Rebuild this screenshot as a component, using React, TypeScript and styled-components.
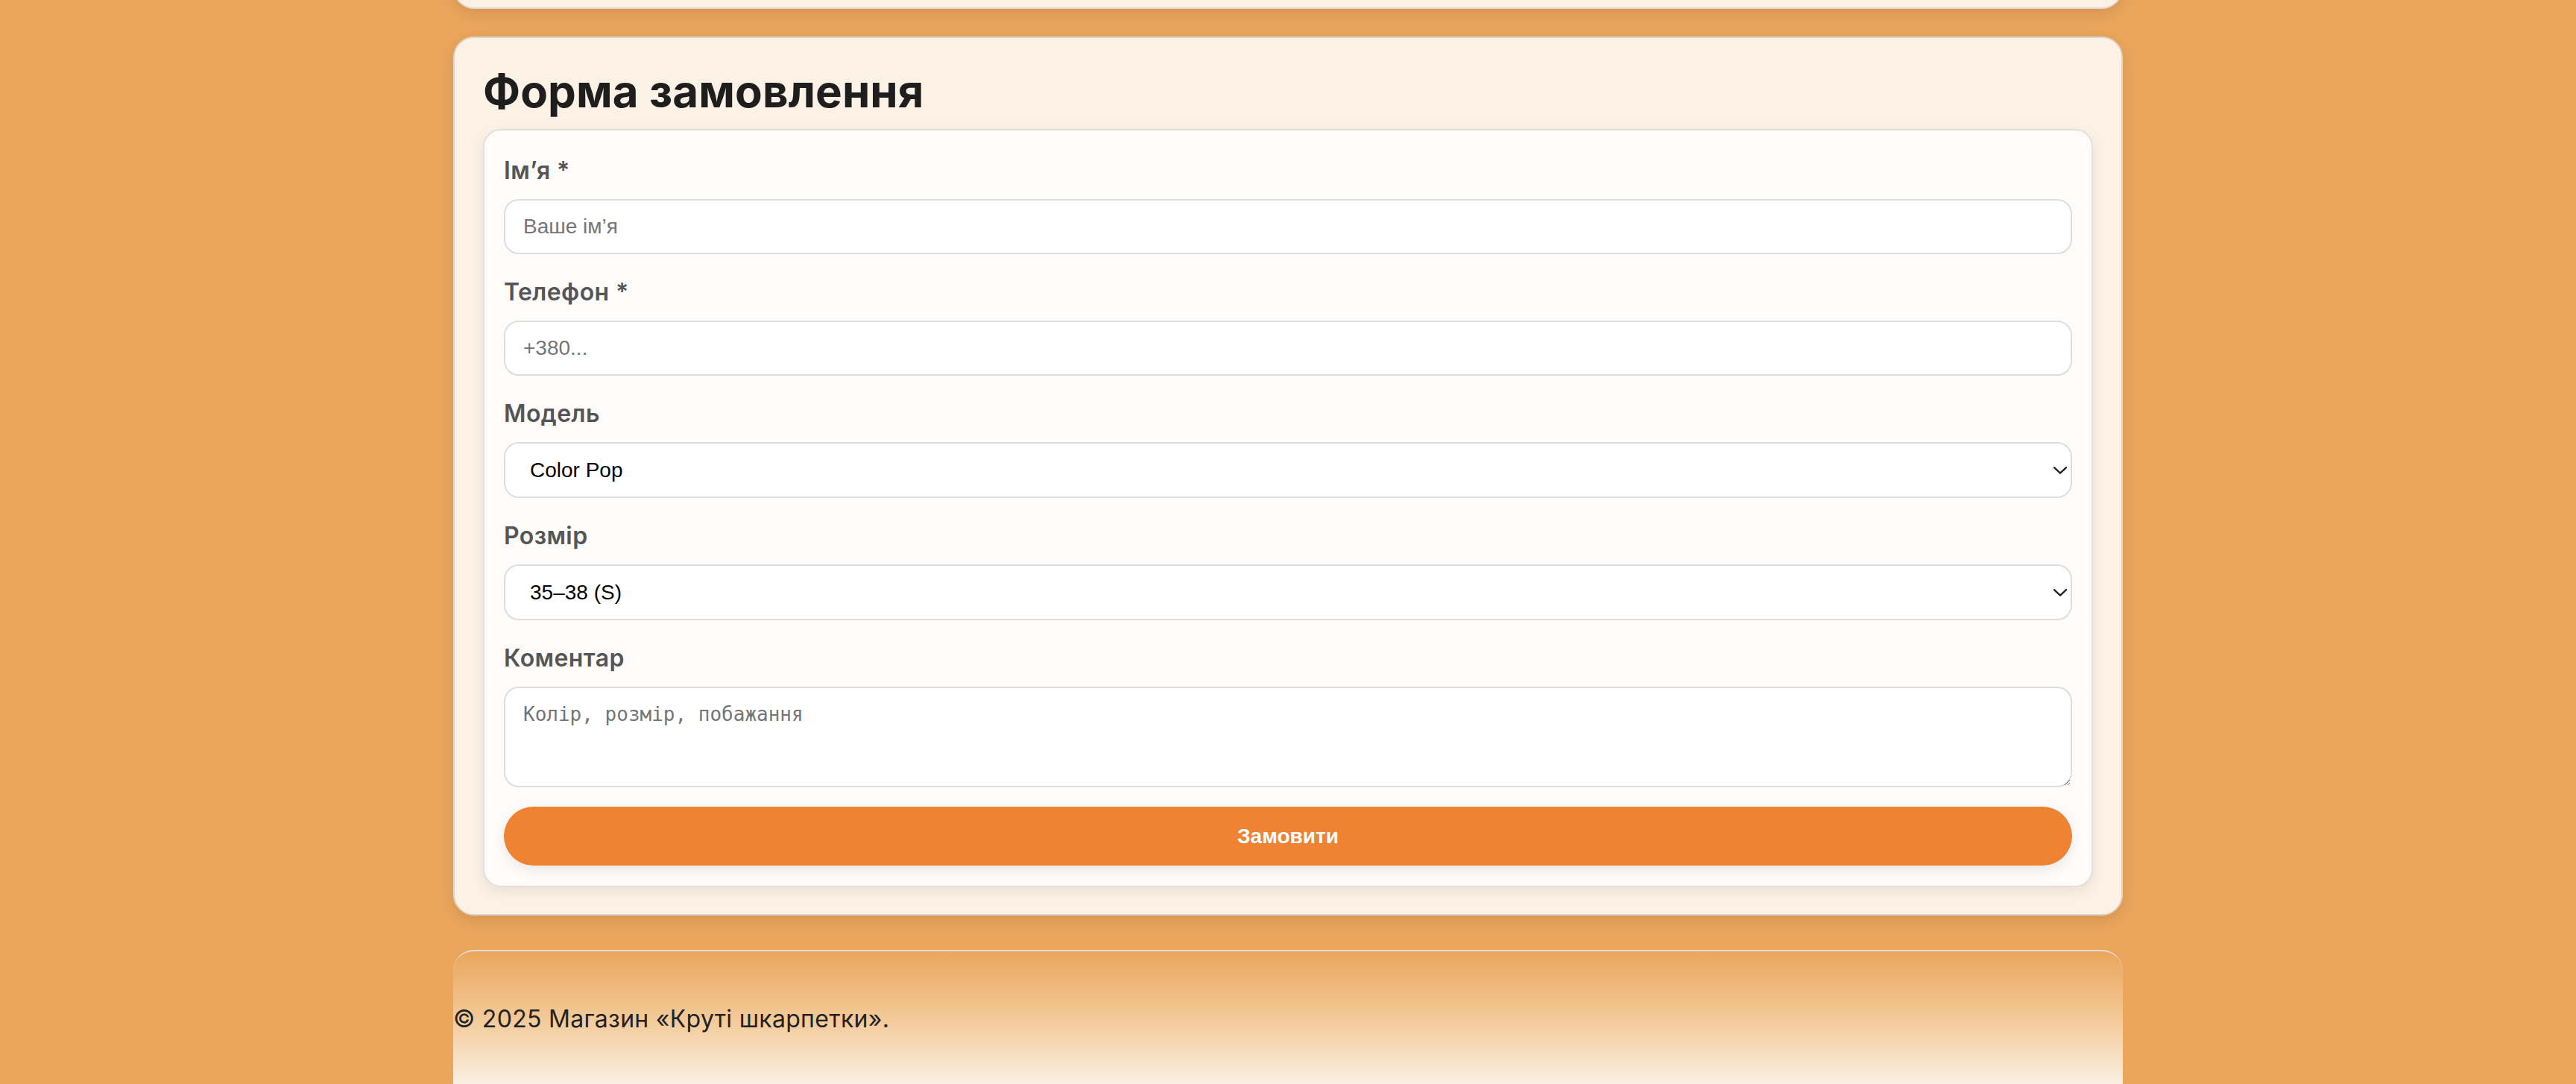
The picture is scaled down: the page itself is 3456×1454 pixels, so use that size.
import React from "react";
import styled, { createGlobalStyle } from "styled-components";

const GlobalStyle = createGlobalStyle`
  html, body {
    margin: 0;
    padding: 0;
    background: #eaa65c;
  }
  body {
    font-family: Inter, "Noto Sans", sans-serif;
    overflow: hidden;
  }
  * { box-sizing: border-box; }
`;

const Page = styled.div`
  width: 2240px;
  margin: 0 auto;
  display: flex;
  flex-direction: column;
`;

const PrevCard = styled.section`
  height: 160px;
  margin-top: -148px;
  background: #fbf1e5;
  border: 2px solid #ddd6ce;
  border-radius: 28px;
  box-shadow: 0 6px 20px rgba(90, 40, 0, 0.14);
`;

const Card = styled.section`
  margin-top: 37px;
  background: #fbf1e5;
  border: 2px solid #ddd6ce;
  border-radius: 28px;
  padding: 35px 38px 36px;
  box-shadow: 0 6px 20px rgba(90, 40, 0, 0.14);
`;

const Title = styled.h2`
  margin: 0 0 15px;
  font-family: Inter, "Noto Sans", sans-serif;
  font-weight: 700;
  font-size: 60px;
  line-height: 72px;
  color: #1e1e1e;
  letter-spacing: 0.1px;
`;

const FormBox = styled.form`
  display: flex;
  flex-direction: column;
  background: #fdfcfa;
  border: 2px solid #e3e0dc;
  border-radius: 24px;
  padding: 30px 26px 27px;
  box-shadow: 0 6px 18px rgba(0, 0, 0, 0.07);
`;

const Field = styled.div<{ $after: number }>`
  display: flex;
  flex-direction: column;
  gap: 14px;
  margin-bottom: ${(p) => p.$after}px;
`;

const Label = styled.label`
  font-family: Inter, "Noto Sans", sans-serif;
  font-weight: 600;
  font-size: 32px;
  line-height: 48px;
  letter-spacing: 0.4px;
  color: #555555;
`;

const controlBase = `
  width: 100%;
  background: #ffffff;
  border: 2px solid #dedede;
  border-radius: 20px;
  font-family: "Liberation Sans", Arial, sans-serif;
  font-size: 28px;
  color: #111111;
  outline: none;
  margin: 0;
`;

const TextInput = styled.input`
  ${controlBase}
  height: 74px;
  padding: 0 24px;
  &::placeholder { color: #757575; }
`;

const SelectWrap = styled.div`
  position: relative;
  display: flex;
`;

const Select = styled.select`
  ${controlBase}
  height: 75px;
  padding: 0 40px 0 33px;
  appearance: none;
  -webkit-appearance: none;
  color: #000000;
`;

const Chevron = styled.svg`
  position: absolute;
  right: 7px;
  top: 50%;
  margin-top: -5px;
  width: 18px;
  height: 10px;
  pointer-events: none;
`;

const TextArea = styled.textarea`
  ${controlBase}
  height: 135px;
  padding: 20px 24px;
  font-family: "DejaVu Sans Mono", "Liberation Mono", monospace;
  font-size: 26px;
  resize: vertical;
  &::placeholder { color: #757575; }
`;

const Submit = styled.button`
  height: 79px;
  width: 100%;
  border: none;
  border-radius: 999px;
  background: #ee8333;
  color: #ffffff;
  font-family: "Liberation Sans", Arial, sans-serif;
  font-weight: 700;
  font-size: 28px;
  cursor: pointer;
  box-shadow: 0 6px 16px rgba(0, 0, 0, 0.08);
`;

const Footer = styled.footer`
  margin-top: 46px;
  border-top: 2px solid #e6dcd0;
  border-radius: 28px 28px 0 0;
  background: linear-gradient(180deg, #eaa65c 0%, #f3c998 50%, #fbf1e5 100%);
  padding: 67px 0 65px;
`;

const FooterText = styled.p`
  margin: 0;
  font-family: Inter, "Noto Sans", sans-serif;
  font-weight: 400;
  font-size: 32px;
  line-height: 48px;
  letter-spacing: 0.3px;
  color: #222222;
`;

const ChevronIcon = () => (
  <Chevron viewBox="0 0 18 10" fill="none">
    <path d="M1 1.2 L9 8.6 L17 1.2" stroke="#222" strokeWidth="2.4" strokeLinecap="round" strokeLinejoin="round" />
  </Chevron>
);

export default function App() {
  return (
    <>
      <GlobalStyle />
      <Page>
        <PrevCard />
        <Card>
          <Title>Форма замовлення</Title>
          <FormBox onSubmit={(e) => e.preventDefault()}>
            <Field $after={27}>
              <Label htmlFor="name">Ім’я *</Label>
              <TextInput id="name" type="text" placeholder="Ваше ім’я" />
            </Field>
            <Field $after={27}>
              <Label htmlFor="phone">Телефон *</Label>
              <TextInput id="phone" type="tel" placeholder="+380..." />
            </Field>
            <Field $after={27}>
              <Label htmlFor="model">Модель</Label>
              <SelectWrap>
                <Select id="model" defaultValue="Color Pop">
                  <option>Color Pop</option>
                  <option>Classic</option>
                  <option>Sport</option>
                </Select>
                <ChevronIcon />
              </SelectWrap>
            </Field>
            <Field $after={27}>
              <Label htmlFor="size">Розмір</Label>
              <SelectWrap>
                <Select id="size" defaultValue="35–38 (S)">
                  <option>35–38 (S)</option>
                  <option>39–42 (M)</option>
                  <option>43–46 (L)</option>
                </Select>
                <ChevronIcon />
              </SelectWrap>
            </Field>
            <Field $after={26}>
              <Label htmlFor="comment">Коментар</Label>
              <TextArea id="comment" placeholder="Колір, розмір, побажання" />
            </Field>
            <Submit type="submit">Замовити</Submit>
          </FormBox>
        </Card>
        <Footer>
          <FooterText>© 2025 Магазин «Круті шкарпетки».</FooterText>
        </Footer>
      </Page>
    </>
  );
}
